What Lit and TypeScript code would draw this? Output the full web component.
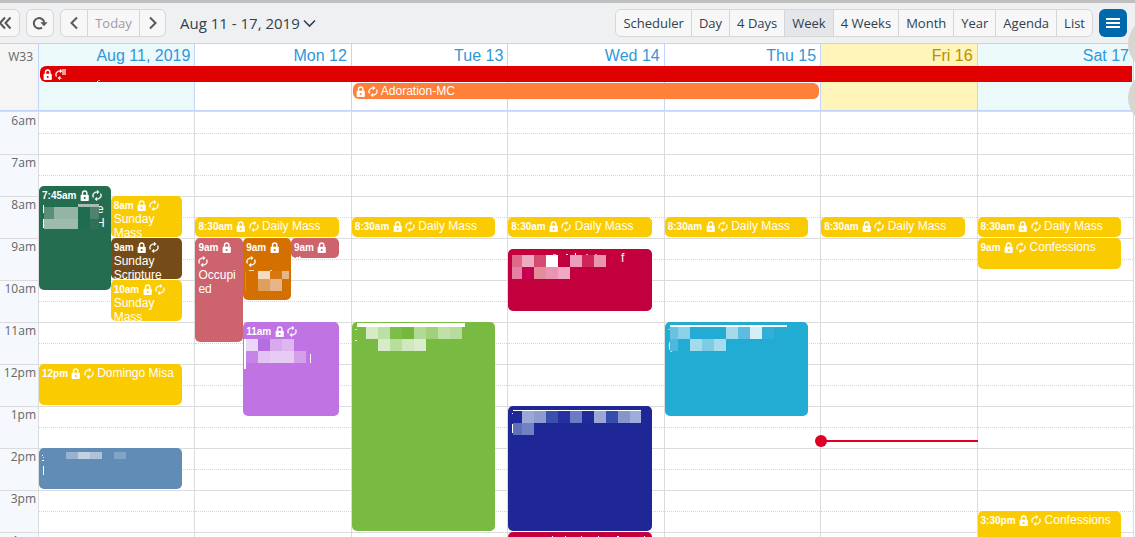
import { LitElement, html, svg, css, nothing } from "lit";
import { customElement, state } from "lit/decorators.js";
import { classMap } from "lit/directives/class-map.js";
import { styleMap } from "lit/directives/style-map.js";

const HOUR = 42;
const FIRST_HOUR = 6;
const HOURS = ["6am", "7am", "8am", "9am", "10am", "11am", "12pm", "1pm", "2pm", "3pm", "4pm"];

const YELLOW = "#fbcb02";
const ROSE = "#cd636c";
const CRIMSON = "#c2003e";

type Block = [number, number, number, number, string];
type Letter = [number, number, string];

interface CalEvent {
  start: number;
  end: number;
  color: string;
  time?: string;
  title?: string;
  lane?: [number, number, number];
  blocks?: Block[];
  letters?: Letter[];
}

interface Day {
  label: string;
  kind?: string;
  now?: number;
  events: CalEvent[];
}

const W = "#ffffff";
const run = (x: number, y: number, w: number, h: number, colors: string[]): Block[] =>
  colors.map((c, i): Block => [x + i * w, y, w, h, c]).filter((b) => b[4] !== "");

const dailyMass: CalEvent = { start: 8.5, end: 9, color: YELLOW, time: "8:30am", title: "Daily Mass" };

const DAYS: Day[] = [
  {
    label: "Aug 11, 2019",
    kind: "weekend",
    events: [
      {
        start: 7.75, end: 10.25, color: "#256d51", time: "7:45am", lane: [0, 1, 2],
        letters: [[58, 27, "e"], [57, 41, "H"]],
        blocks: [
          [4, 19, 1, 8, W], [4, 33, 1, 9, W],
          [5, 21, 10, 12, "#5b8e77"], [15, 21, 24, 12, "#93b5a5"],
          [5, 33, 34, 10, "#9dbcae"], [39, 18, 21, 3, "#a3bfb3"],
          [39, 21, 12, 22, "#1f6c50"], [51, 21, 9, 12, "#4f836d"], [51, 33, 9, 10, "#2f7056"],
        ],
      },
      { start: 8, end: 9, color: YELLOW, time: "8am", title: "Sunday Mass", lane: [1, 1, 2] },
      { start: 9, end: 10, color: "#754c18", time: "9am", title: "Sunday Scripture", lane: [1, 1, 2] },
      { start: 10, end: 11, color: YELLOW, time: "10am", title: "Sunday Mass", lane: [1, 1, 2] },
      { start: 12, end: 13, color: YELLOW, time: "12pm", title: "Domingo Misa" },
      {
        start: 14, end: 15, color: "#608cb6",
        blocks: [
          [27, 4, 12, 7, "#98b2d0"], [39, 4, 12, 7, "#c1d2e3"], [51, 4, 12, 7, "#aec3da"], [75, 4, 12, 7, "#82a4c5"],
          [3, 7, 1, 1, W], [4, 9, 1, 1, "#d5e1ec"], [3, 12, 2, 1, W], [4, 18, 1, 9, W],
        ],
      },
    ],
  },
  {
    label: "Mon 12",
    events: [
      dailyMass,
      { start: 9, end: 11.5, color: ROSE, time: "9am", title: "Occupied", lane: [0, 1, 3] },
      {
        start: 9, end: 10.5, color: "#d47000", time: "9am", lane: [1, 1, 3],
        blocks: [
          [6, 32, 5, 1, "#f5dcc0"], [27, 32, 2, 1, "#f5dcc0"], [2, 33, 1, 20, "#dd8430"],
          [15, 33, 12, 8, "#f5dcc0"], [27, 33, 12, 8, "#d5790f"], [39, 33, 7, 8, "#e7b688"],
          [15, 41, 12, 12, "#df9f5e"], [27, 41, 12, 12, "#e6b488"],
        ],
      },
      {
        start: 9, end: 9.5, color: ROSE, time: "9am", lane: [2, 1, 3],
        blocks: [[5, 19, 2, 1, W]],
      },
      {
        start: 11, end: 13.25, color: "#c074e3", time: "11am", lane: [1, 2, 3],
        blocks: [
          [1, 17, 2, 30, W],
          ...run(3, 17, 12, 12, ["#ecd6f7", "#b56ee2", "#d8a9ed", "#deb6f0"]),
          ...run(3, 29, 12, 12, ["#c585e6", "#e2c3f2", "#e6ccf4", "#e6ccf4", "#d5a0ea"]),
          [67, 32, 1, 9, W],
        ],
      },
    ],
  },
  {
    label: "Tue 13",
    events: [
      dailyMass,
      {
        start: 11, end: 16, color: "#78ba42",
        blocks: [
          [5, 1, 108, 4, W], [3, 7, 2, 1, "#d5ebc4"], [3, 18, 2, 1, W],
          ...run(14, 5, 12, 12, ["#d5ebc4", "#bcdfa3", "#7dbd49", "#74b93e", "#b3d996", "#a0d07b", "#bfe1a6", "#b6dc9b"]),
          ...run(26, 17, 12, 12, ["#d8ebc9", "#b8de9e", "#cfe8be", "#d9edcc"]),
        ],
      },
    ],
  },
  {
    label: "Wed 14",
    events: [
      dailyMass,
      {
        start: 9.25, end: 10.75, color: CRIMSON,
        letters: [[113, 13, "f"]],
        blocks: [
          [45, 5, 3, 1, "#f0a8c4"], [58, 5, 2, 1, W], [67, 4, 1, 2, W], [78, 5, 2, 1, "#f0a8c4"], [87, 5, 2, 1, "#e996ac"],
          [4, 6, 10, 12, "#de6a8b"],
          ...run(14, 6, 12, 12, ["#eeabc0", "#d54a70", W, "", "#eb9dbb", "#ce2658", "#e996ac"]),
          [4, 18, 10, 12, "#e480a3"],
          ...run(14, 18, 12, 12, ["#c6004f", "#e28f9b", "#eb93b4", "#f0a8c4"]),
        ],
      },
      {
        start: 13, end: 16, color: "#1f2797",
        blocks: [
          [5, 4, 128, 1, W], [4, 7, 1, 1, W], [4, 18, 1, 9, W],
          ...run(14, 5, 12, 12, ["#9ba7d5", "#8e9bd0", "#3a4fae", "#2630a0", "#697bc2", "#222a9a", "#9ca7d8", "#374dad", "#8795cd"]),
          [122, 5, 11, 12, "#a0acdb"],
          [5, 17, 9, 12, "#5f70bb"], [14, 17, 12, 12, "#7081c6"],
        ],
      },
      {
        start: 16, end: 17, color: CRIMSON,
        blocks: [[44, 4, 1, 1, W], [57, 4, 1, 1, W], [73, 4, 1, 1, W], [90, 4, 1, 1, W], [109, 4, 2, 1, W], [136, 4, 1, 1, W]],
      },
    ],
  },
  {
    label: "Thu 15",
    events: [
      dailyMass,
      {
        start: 11, end: 13.25, color: "#22abd3",
        letters: [[3, 27, "("]],
        blocks: [
          [5, 3, 117, 2, W], [3, 7, 2, 1, "#8bd0e8"],
          [5, 5, 8, 12, "#68c3e0"], [13, 5, 12, 12, "#8bd0e8"],
          ...run(61, 5, 12, 12, ["#a3dbeb", "#5cbde0", "#d6eff6", "#30b0d8"]),
          [5, 17, 8, 12, "#4cb9dc"],
          ...run(25, 17, 12, 12, ["#a3dbeb", "#7ecce4", "#a5dcee"]),
        ],
      },
    ],
  },
  { label: "Fri 16", kind: "today", now: 13.83, events: [dailyMass] },
  {
    label: "Sat 17",
    kind: "weekend",
    events: [
      dailyMass,
      { start: 9, end: 9.75, color: YELLOW, time: "9am", title: "Confessions" },
      { start: 15.5, end: 16.5, color: YELLOW, time: "3:30pm", title: "Confessions" },
    ],
  },
];

const VIEWS = ["Scheduler", "Day", "4 Days", "Week", "4 Weeks", "Month", "Year", "Agenda", "List"];

const lockIcon = html`<svg class="glyph lock" viewBox="0 0 9 11" aria-label="Locked">
  <path d="M2.500 5V3.200a2.200 2.200 0 0 1 4.400 0V5" fill="none" stroke="#fff" stroke-width="1.400" />
  <path fill-rule="evenodd" fill="#fff" d="M1.300 4.800h6.800q.7 0 .7.700v4.800q0 .7-.7.700H1.300q-.7 0-.7-.7V5.500q0-.7.7-.7zM4.700 6.900a1 1 0 1 0 0 2 1 1 0 0 0 0-2z" />
</svg>`;

const repeatIcon = html`<svg class="glyph" viewBox="3.500 1 17 22" preserveAspectRatio="none" aria-label="Repeats">
  <path fill="#fff" stroke="#fff" stroke-width=".4" d="M12 6v3l4-4-4-4v3c-4.42 0-8 3.58-8 8 0 1.57.46 3.03 1.24 4.26L6.7 14.8c-.45-.83-.7-1.79-.7-2.8 0-3.31 2.69-6 6-6zm6.76 1.74L17.3 9.2c.44.84.7 1.79.7 2.8 0 3.31-2.69 6-6 6v-3l-4 4 4 4v-3c4.42 0 8-3.58 8-8 0-1.57-.46-3.03-1.24-4.26z" />
</svg>`;

const stroke = (d: string, w = 14, h = 14, weight = 2) => html`<svg width=${w} height=${h} viewBox="0 0 ${w} ${h}" aria-hidden="true">
  <path d=${d} fill="none" stroke="currentColor" stroke-width=${weight} />
</svg>`;

@customElement("app-root")
class AppRoot extends LitElement {
  @state() private view = "Week";

  static styles = css`
    :host {
      display: flex;
      flex-direction: column;
      height: 100vh;
      overflow: hidden;
      position: relative;
      background: #fff;
      font-family: "Liberation Sans", Arial, sans-serif;
    }
    * { box-sizing: border-box; }
    button { font: inherit; color: inherit; margin: 0; cursor: pointer; }
    .toolbar {
      flex: none;
      display: flex;
      align-items: center;
      height: 44px;
      padding-right: 8px;
      border-top: 3px solid #bfbfbf;
      border-bottom: 1px solid #c3d5fb;
      background: #eff0f2;
      color: #2f4050;
      font: 13px/18px "Open Sans", sans-serif;
    }
    .group {
      display: flex;
      height: 28px;
      border: 1px solid #d5d6d8;
      border-radius: 6px;
      background: #f7f7f7;
      overflow: hidden;
    }
    .group button {
      display: flex;
      align-items: center;
      justify-content: center;
      padding: 0 7px;
      border: 0;
      border-left: 1px solid #d5d6d8;
      background: none;
      white-space: nowrap;
    }
    .group button:first-child { border-left: 0; }
    .group button.selected { background: #e4e6ea; }
    .icons { color: #57585a; }
    .icons button { width: 26px; padding: 0; }
    .icons button.today { width: 52px; color: #9c9ba6; }
    .back { margin-left: -8px; }
    .refresh, .nav { margin-left: 6px; }
    .range {
      display: flex;
      align-items: center;
      gap: 3px;
      margin-left: 14px;
      padding: 0;
      border: 0;
      background: none;
      font-size: 15px;
      white-space: nowrap;
    }
    .views { margin-left: auto; }
    .menu {
      display: flex;
      align-items: center;
      justify-content: center;
      width: 28px;
      height: 28px;
      margin-left: 6px;
      padding: 0;
      border: 0;
      border-radius: 6px;
      background: #0069ac;
      color: #fff;
    }
    .head, .body {
      display: grid;
      grid-template-columns: 39px repeat(7, minmax(0, 1fr));
      padding-right: 1px;
    }
    .head {
      flex: none;
      grid-template-rows: 22px 16px 1px 16px 11px;
      border-bottom: 1px solid #c3d5fb;
    }
    .week, .dayhead { grid-row: 1 / -1; border-right: 1px solid #c3d5fb; }
    .week {
      grid-column: 1;
      padding: 5px 5px 0 0;
      background: #f5f5f5;
      color: #666;
      font: 12px/16px "Open Sans", sans-serif;
      text-align: right;
    }
    .dayhead {
      padding: 2px 4px 0 0;
      color: #3097d8;
      font-size: 16px;
      line-height: 20px;
      text-align: right;
      white-space: nowrap;
    }
    .dayhead.weekend { background: #ebf9fb; }
    .dayhead.today { background: #fff5ba; color: #b98f00; }
    .banner {
      position: relative;
      display: flex;
      align-items: center;
      gap: 3px;
      margin: 0 2px 0 1px;
      padding-left: 3px;
      border-radius: 6px;
      color: #fff;
      font-size: 12px;
      line-height: 16px;
    }
    .banner.all { grid-row: 2; grid-column: 2 / 9; border-radius: 6px 0 0 6px; background: #e00000; }
    .banner.adoration { grid-row: 4; grid-column: 4 / 7; background: #ff8038; }
    .body {
      flex: 1;
      min-height: 0;
      overflow: hidden;
      border-top: 1px solid #dcdcdc;
      align-items: start;
    }
    .times { background: #f5f8fc; border-right: 1px solid #dcdcdc; }
    .time, .hour { height: 42px; border-top: 1px solid #dcdcdc; }
    .time:first-child, .hour:first-child { border-top-color: transparent; }
    .time {
      padding-right: 2px;
      color: #666;
      font: 12px/16px "Open Sans", sans-serif;
      text-align: right;
    }
    .day { position: relative; border-right: 1px solid #dcdcdc; }
    .half { margin-top: 20px; border-top: 1px dotted #d6d6d6; }
    .event {
      position: absolute;
      padding: 2px 5px 0 3px;
      border-radius: 5px;
      overflow: hidden;
      color: #fff;
      font-size: 12px;
      line-height: 14px;
      overflow-wrap: anywhere;
    }
    .event b { font-size: 10px; line-height: 10px; }
    .glyph { width: 10px; height: 11px; vertical-align: -2px; }
    .lock { width: 9px; }
    .banner .glyph { flex: none; }
    .mosaic { position: absolute; left: 0; top: 0; width: 100%; height: 100%; shape-rendering: crispEdges; }
    .mosaic text { fill: #fff; font-size: 12px; }
    .now {
      position: absolute;
      left: 0;
      right: -1px;
      height: 2px;
      background: #dd0022;
      z-index: 2;
    }
    .now::before {
      content: "";
      position: absolute;
      left: -6px;
      top: -5px;
      width: 12px;
      height: 12px;
      border-radius: 50%;
      background: #dd0022;
    }
    .bubble {
      position: absolute;
      right: -47px;
      width: 54px;
      height: 54px;
      border-radius: 50%;
      background: #d9d6d0;
      z-index: 3;
    }
    .bubble.first { top: 17px; }
    .bubble.second { top: 71px; }
  `;

  private mosaic(blocks: Block[] = [], letters: Letter[] = []) {
    if (!blocks.length && !letters.length) return nothing;
    return html`<svg class="mosaic">
      ${letters.map(([x, y, t]) => svg`<text x=${x} y=${y}>${t}</text>`)}
      ${blocks.map(([x, y, w, h, c]) => svg`<rect x=${x} y=${y} width=${w} height=${h} fill=${c}></rect>`)}
    </svg>`;
  }

  private event(e: CalEvent) {
    const [at, span, of] = e.lane ?? [0, 1, 1];
    const usable = 92.25;
    const box = styleMap({
      top: `${(e.start - FIRST_HOUR) * HOUR}px`,
      height: `${(e.end - e.start) * HOUR - 1}px`,
      left: `${(at * usable) / of}%`,
      width: `${(span * usable) / of}%`,
      background: e.color,
    });
    return html`<article class="event" style=${box}>
      ${e.time ? html`<b>${e.time}</b> ${lockIcon} ${repeatIcon} ${e.title ?? ""}` : nothing}
      ${this.mosaic(e.blocks, e.letters)}
    </article>`;
  }

  render() {
    return html`
      <header class="toolbar">
        <div class="group icons back"><button aria-label="Collapse">${stroke("M7 1.500 2 7l5 5.500M12.500 1.500 7.500 7l5 5.500", 16, 14)}</button></div>
        <div class="group icons refresh">
          <button aria-label="Refresh">
            <svg width="16" height="14" viewBox="0 0 16 14" aria-hidden="true">
              <path d="M10 11.600A5.200 5.200 0 1 1 12.200 6.500" fill="none" stroke="currentColor" stroke-width="2" />
              <path d="M8.300 6.300H15.600L12 10.300z" fill="currentColor" />
            </svg>
          </button>
        </div>
        <nav class="group icons nav">
          <button aria-label="Previous">${stroke("M10 1.500 4.500 7l5.500 5.500")}</button>
          <button class="today">Today</button>
          <button aria-label="Next">${stroke("M4 1.500 9.500 7 4 12.500")}</button>
        </nav>
        <button class="range">Aug 11 - 17, 2019 ${stroke("M1 1.500 6.500 7 12 1.500", 13, 9, 1.6)}</button>
        <nav class="group views">
          ${VIEWS.map((v) => html`<button class=${classMap({ selected: v === this.view })} @click=${() => (this.view = v)}>${v}</button>`)}
        </nav>
        <button class="menu" aria-label="Menu">${stroke("M0 2H14M0 6H14M0 10H14", 14, 12)}</button>
      </header>

      <section class="head">
        <div class="week">W33</div>
        ${DAYS.map(
          (d, i) => html`<div class="dayhead ${d.kind ?? ""}" style=${styleMap({ gridColumn: `${i + 2}` })}>${d.label}</div>`
        )}
        <div class="banner all">
          ${lockIcon} ${repeatIcon}
          ${this.mosaic([[21, 9, 6, 3, "#e00000"], [22, 3, 4, 6, "#f59d9d"], [57, 15, 1, 1, W], [58, 14, 2, 1, "#f59d9d"]])}
        </div>
        <div class="banner adoration">${lockIcon} ${repeatIcon} <span>Adoration-MC</span></div>
      </section>

      <section class="body">
        <div class="times">${HOURS.map((h) => html`<div class="time">${h}</div>`)}</div>
        ${DAYS.map(
          (d) => html`<div class="day">
            ${HOURS.map(() => html`<div class="hour"><div class="half"></div></div>`)}
            ${d.events.map((e) => this.event(e))}
            ${d.now ? html`<div class="now" style=${styleMap({ top: `${(d.now - FIRST_HOUR) * HOUR - 1}px` })}></div>` : nothing}
          </div>`
        )}
      </section>
      <span class="bubble first"></span>
      <span class="bubble second"></span>
    `;
  }
}
